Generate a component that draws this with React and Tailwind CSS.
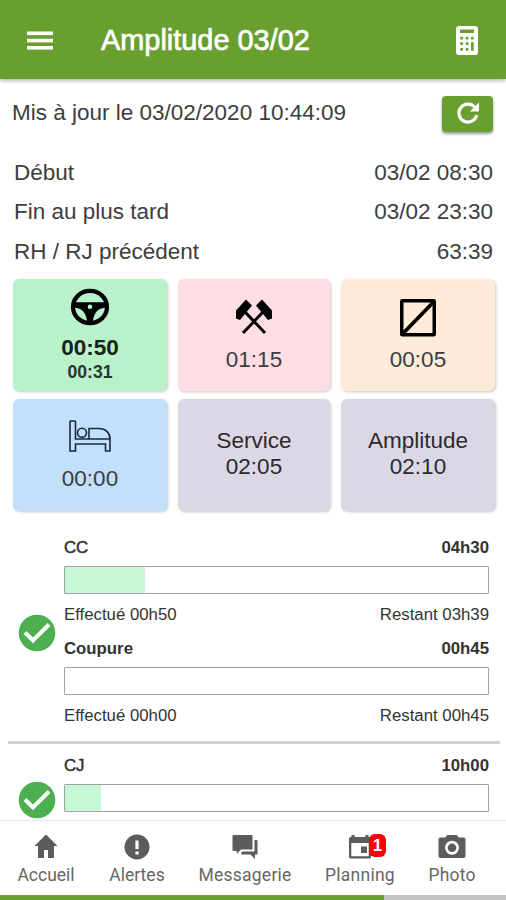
import React from "react";

function MenuIcon() {
  return (
    <svg width="26" height="19" viewBox="0 0 26 19" className="block" fill="#fff">
      <rect y="0.5" width="26" height="3.6" />
      <rect y="7.800" width="26" height="3.6" />
      <rect y="15" width="26" height="3.6" />
    </svg>
  );
}

function CalculatorIcon() {
  return (
    <svg width="22" height="29" viewBox="0 0 22 29" className="block">
      <rect width="22" height="29" rx="3" fill="#fff" />
      <g fill="#689f2f">
        <rect x="4" y="3.5" width="14" height="3.5" />
        <rect x="4.3" y="10.8" width="2.7" height="2.7" />
        <rect x="9.7" y="10.8" width="2.7" height="2.7" />
        <rect x="15" y="10.8" width="2.7" height="2.7" />
        <rect x="4.3" y="16.2" width="2.7" height="2.7" />
        <rect x="9.7" y="16.2" width="2.7" height="2.7" />
        <rect x="15" y="16.2" width="2.7" height="8.6" />
        <rect x="4.3" y="22" width="2.7" height="2.7" />
        <rect x="9.7" y="22" width="2.7" height="2.7" />
      </g>
    </svg>
  );
}

function RefreshIcon() {
  return (
    <svg width="24" height="24" viewBox="0 0 24 24" className="-mt-[2px] block">
      <path d="M20.700 14.200A9 9 0 1 1 18.600 6" fill="none" stroke="#fff" strokeWidth="3.2" />
      <path d="M23 1.500v9h-9z" fill="#fff" />
    </svg>
  );
}

function WheelIcon() {
  return (
    <svg width="40" height="38" viewBox="0 0 40 38" className="block">
      <ellipse cx="20" cy="19" rx="17" ry="16.1" fill="none" stroke="#000" strokeWidth="4.2" />
      <path
        fillRule="evenodd"
        d="M3 14.300H37L36.500 19.700C28 19.500 23 25 22.800 36H17.200C17 25 12 19.500 3.500 19.700ZM20 16.500a2.300 2.300 0 1 0 0 4.600a2.300 2.300 0 1 0 0-4.600Z"
        fill="#000"
      />
    </svg>
  );
}

function HammersIcon() {
  return (
    <svg width="38" height="36" viewBox="0 0 38 36" className="block">
      <path d="M10.500 13.500L30 34M27.500 13.500L8 34" stroke="#000" strokeWidth="3" />
      <path d="M11 0.500L17 6.500L5 21L1 19.500V11.500Z" fill="#000" />
      <path d="M27 0.500L21 6.500L33 21L37 19.500V11.500Z" fill="#000" />
    </svg>
  );
}

function SlashedSquareIcon() {
  return (
    <svg width="36" height="38" viewBox="0 0 36 38" className="block">
      <rect x="1.75" y="1.75" width="32.5" height="34" rx="0.5" fill="none" stroke="#000" strokeWidth="3.5" />
      <path d="M2.500 35L33.500 3" stroke="#000" strokeWidth="3.8" />
    </svg>
  );
}

function BedIcon() {
  return (
    <svg width="43" height="33" viewBox="0 0 43 33" className="block" fill="none" stroke="#1b2a3a" strokeWidth="1.6">
      <path d="M1 1.500Q1 1 2 1H5.500Q6.500 1 6.500 2V19H41V31H36.500V24H6.500V31H1Z" />
      <circle cx="13" cy="12.700" r="4.500" />
      <path d="M20 19V8.500H30C36.500 8.500 41 12.500 41 19" />
    </svg>
  );
}

function CheckBadge() {
  return (
    <svg width="38" height="38" viewBox="0 0 38 38" className="block">
      <circle cx="19" cy="19" r="18.300" fill="#4caf50" />
      <path d="M7 18.500L15 26.500L31 10.500" fill="none" stroke="#fff" strokeWidth="4" />
    </svg>
  );
}

function HomeIcon() {
  return (
    <svg width="24" height="25" viewBox="0 0 24 25" className="block" fill="#5c5c5c">
      <path d="M12 0.500L23.500 12H20V24H14V16H10V24H4V12H0.500Z" />
    </svg>
  );
}

function AlertIcon() {
  return (
    <svg width="26" height="26" viewBox="0 0 26 26" className="block">
      <circle cx="13" cy="13" r="12.500" fill="#5c5c5c" />
      <rect x="11.400" y="6.500" width="3.200" height="8.500" fill="#fff" />
      <rect x="11.400" y="17.500" width="3.200" height="3" fill="#fff" />
    </svg>
  );
}

function ChatIcon() {
  return (
    <svg width="26" height="26" viewBox="0 0 26 26" className="block" fill="#5c5c5c">
      <path d="M1.500 1H19.500Q20.500 1 20.500 2V15.500H9L4.800 20V17H1.500Q0.500 17 0.500 16V2Q0.500 1 1.500 1Z" />
      <path d="M22.500 6H24.500Q25.500 6 25.500 7V20.500H23V25L18.500 20.500H10.500Q9.500 20.500 9 19L10.500 17.500H22.500Z" />
    </svg>
  );
}

function CalendarIcon() {
  return (
    <svg width="24" height="26" viewBox="0 0 24 26" className="block">
      <path
        fillRule="evenodd"
        d="M3.500 1H6.500V3H17.500V1H20.500V3H21.500Q23 3 23 4.500V23Q23 24.500 21.500 24.500H2.500Q1 24.500 1 23V4.500Q1 3 2.500 3H3.500ZM3.300 9V22.300H20.700V9Z"
        fill="#5c5c5c"
      />
      <rect x="13" y="12.500" width="6" height="6.500" fill="#5c5c5c" />
    </svg>
  );
}

function CameraIcon() {
  return (
    <svg width="28" height="26" viewBox="0 0 28 26" className="block">
      <path
        d="M9.500 1H18.500L21 3.500H25.500Q27.500 3.500 27.500 5.500V22Q27.500 24 25.500 24H2.500Q0.500 24 0.500 22V5.500Q0.500 3.500 2.500 3.500H7Z"
        fill="#5c5c5c"
      />
      <circle cx="14" cy="13.800" r="7" fill="#fff" />
      <circle cx="14" cy="13.800" r="4.300" fill="#5c5c5c" />
    </svg>
  );
}

function InfoRow({ label, value }) {
  return (
    <div className="flex h-[39.5px] items-center justify-between pl-[14px] pr-[13px]">
      <span>{label}</span>
      <span>{value}</span>
    </div>
  );
}

function Card({ color, className = "", children }) {
  return (
    <div
      className={`flex h-[112px] flex-col items-center rounded-[6px] shadow-[1px_1px_3px_rgba(0,0,0,0.22)] ${color} ${className}`}
    >
      {children}
    </div>
  );
}

function Gauge({ label, total, fill, done, left, strong }) {
  return (
    <div className="text-[16.8px] leading-[20px] text-[#333]">
      <div className="flex h-5 justify-between pt-px">
        <span className={strong ? "font-bold" : "[-webkit-text-stroke:0.5px_#333]"}>{label}</span>
        <span className="font-bold">{total}</span>
      </div>
      <div className="mt-[9px] h-[28px] rounded-[1px] border border-[#a3a3a3] bg-white">
        <div className="h-full bg-[#c8f7d6]" style={{ width: fill }} />
      </div>
      {done && (
        <div className="mt-[11px] flex h-5 justify-between">
          <span>{done}</span>
          <span>{left}</span>
        </div>
      )}
    </div>
  );
}

function NavItem({ icon: Icon, label, width, badge, spacing }) {
  return (
    <div className={`flex flex-col items-center pt-[13px] ${width}`}>
      <div className="relative h-[26px]">
        <Icon />
        {badge && (
          <span className="absolute top-0 left-[21px] flex h-[23px] w-[17px] items-center justify-center rounded-[6px] bg-[#fb0007] text-[17px] font-bold leading-none text-white">
            {badge}
          </span>
        )}
      </div>
      <span className={`mt-[3px] whitespace-nowrap font-[Roboto,sans-serif] text-[17.5px] leading-[24px] text-[#666] ${spacing}`}>
        {label}
      </span>
    </div>
  );
}

export default function App() {
  return (
    <div className="flex h-[900px] w-[506px] flex-col overflow-hidden bg-white font-['Liberation_Sans',Arial,sans-serif] text-[22.5px] leading-[26px] text-[#3d3d3d]">
      <header className="z-10 flex h-[79px] shrink-0 items-center bg-[#689f2f] pl-[27px] pr-[28px] pt-px text-white shadow-[0_1px_5px_rgba(0,0,0,0.4)]">
        <MenuIcon />
        <h1 className="ml-[48px] flex-1 text-[28.9px] leading-[34px] [-webkit-text-stroke:0.7px_#fff]">
          Amplitude 03/02
        </h1>
        <CalculatorIcon />
      </header>

      <main className="flex min-h-0 flex-1 flex-col overflow-hidden">
        <div className="mt-[17px] flex h-[36px] shrink-0 items-center justify-between pl-[12px] pr-[13px]">
          <span className="-mt-[3px]">Mis à jour le 03/02/2020 10:44:09</span>
          <button className="flex h-[36px] w-[51px] items-center justify-center rounded-[4px] bg-[#689f2f] shadow-[0_2px_3px_rgba(0,0,0,0.4)]">
            <RefreshIcon />
          </button>
        </div>

        <div className="mt-[21px] shrink-0">
          <InfoRow label="Début" value="03/02 08:30" />
          <InfoRow label="Fin au plus tard" value="03/02 23:30" />
          <InfoRow label="RH / RJ précédent" value="63:39" />
        </div>

        <div className="mt-[7.5px] grid shrink-0 grid-cols-[154px_152px_154px] gap-x-[11px] gap-y-[8px] pl-[13px]">
          <Card color="bg-[#b9f1cb]" className="pt-[9px]">
            <WheelIcon />
            <span className="mt-[9px] font-bold text-[#17241b]">00:50</span>
            <span className="text-[17.6px] font-bold leading-[22px] text-[#26382b]">00:31</span>
          </Card>
          <Card color="bg-[#ffdde4]" className="pt-[20px]">
            <HammersIcon />
            <span className="mt-[12px]">01:15</span>
          </Card>
          <Card color="bg-[#ffecd8]" className="pt-[20px]">
            <SlashedSquareIcon />
            <span className="mt-[10px]">00:05</span>
          </Card>
          <Card color="bg-[#c2dffb]" className="pt-[21px]">
            <BedIcon />
            <span className="mt-[13px]">00:00</span>
          </Card>
          <Card color="bg-[#dcd7e4]" className="pt-[29px] text-[#2c2a2e]">
            <span>Service</span>
            <span>02:05</span>
          </Card>
          <Card color="bg-[#dcd7e4]" className="pt-[29px] text-[#2c2a2e]">
            <span>Amplitude</span>
            <span>02:10</span>
          </Card>
        </div>

        <section className="mt-[26px] flex shrink-0 items-center pl-[18px] pr-[17px]">
          <div className="pt-[2px]">
            <CheckBadge />
          </div>
          <div className="ml-[8px] flex flex-1 flex-col gap-[13px]">
            <Gauge label="CC" total="04h30" fill="80px" done="Effectué 00h50" left="Restant 03h39" />
            <Gauge label="Coupure" total="00h45" fill="0px" done="Effectué 00h00" left="Restant 00h45" strong />
          </div>
        </section>

        <div className="ml-[8px] mr-[6px] mt-[15px] h-[3px] shrink-0 bg-[#cfcfcf]" />

        <section className="mt-[11px] flex shrink-0 items-start pl-[18px] pr-[17px]">
          <div className="pt-[26px]">
            <CheckBadge />
          </div>
          <div className="ml-[8px] flex-1">
            <Gauge label="CJ" total="10h00" fill="36px" />
          </div>
        </section>
      </main>

      <nav className="flex h-[75px] shrink-0 border-t border-[#e9e9e9] bg-white">
        <NavItem icon={HomeIcon} label="Accueil" width="w-[92px]" spacing="tracking-[0px]" />
        <NavItem icon={AlertIcon} label="Alertes" width="w-[90px]" spacing="tracking-[0px]" />
        <NavItem icon={ChatIcon} label="Messagerie" width="w-[126px]" spacing="tracking-[0.25px]" />
        <NavItem icon={CalendarIcon} label="Planning" width="w-[104px]" spacing="tracking-[0.25px]" badge="1" />
        <NavItem icon={CameraIcon} label="Photo" width="w-[80px]" spacing="tracking-[0.2px]" />
      </nav>
      <div className="h-[5px] shrink-0 bg-[#c4c4c4]">
        <div className="h-full w-[384px] bg-[#689f2f]" />
      </div>
    </div>
  );
}
